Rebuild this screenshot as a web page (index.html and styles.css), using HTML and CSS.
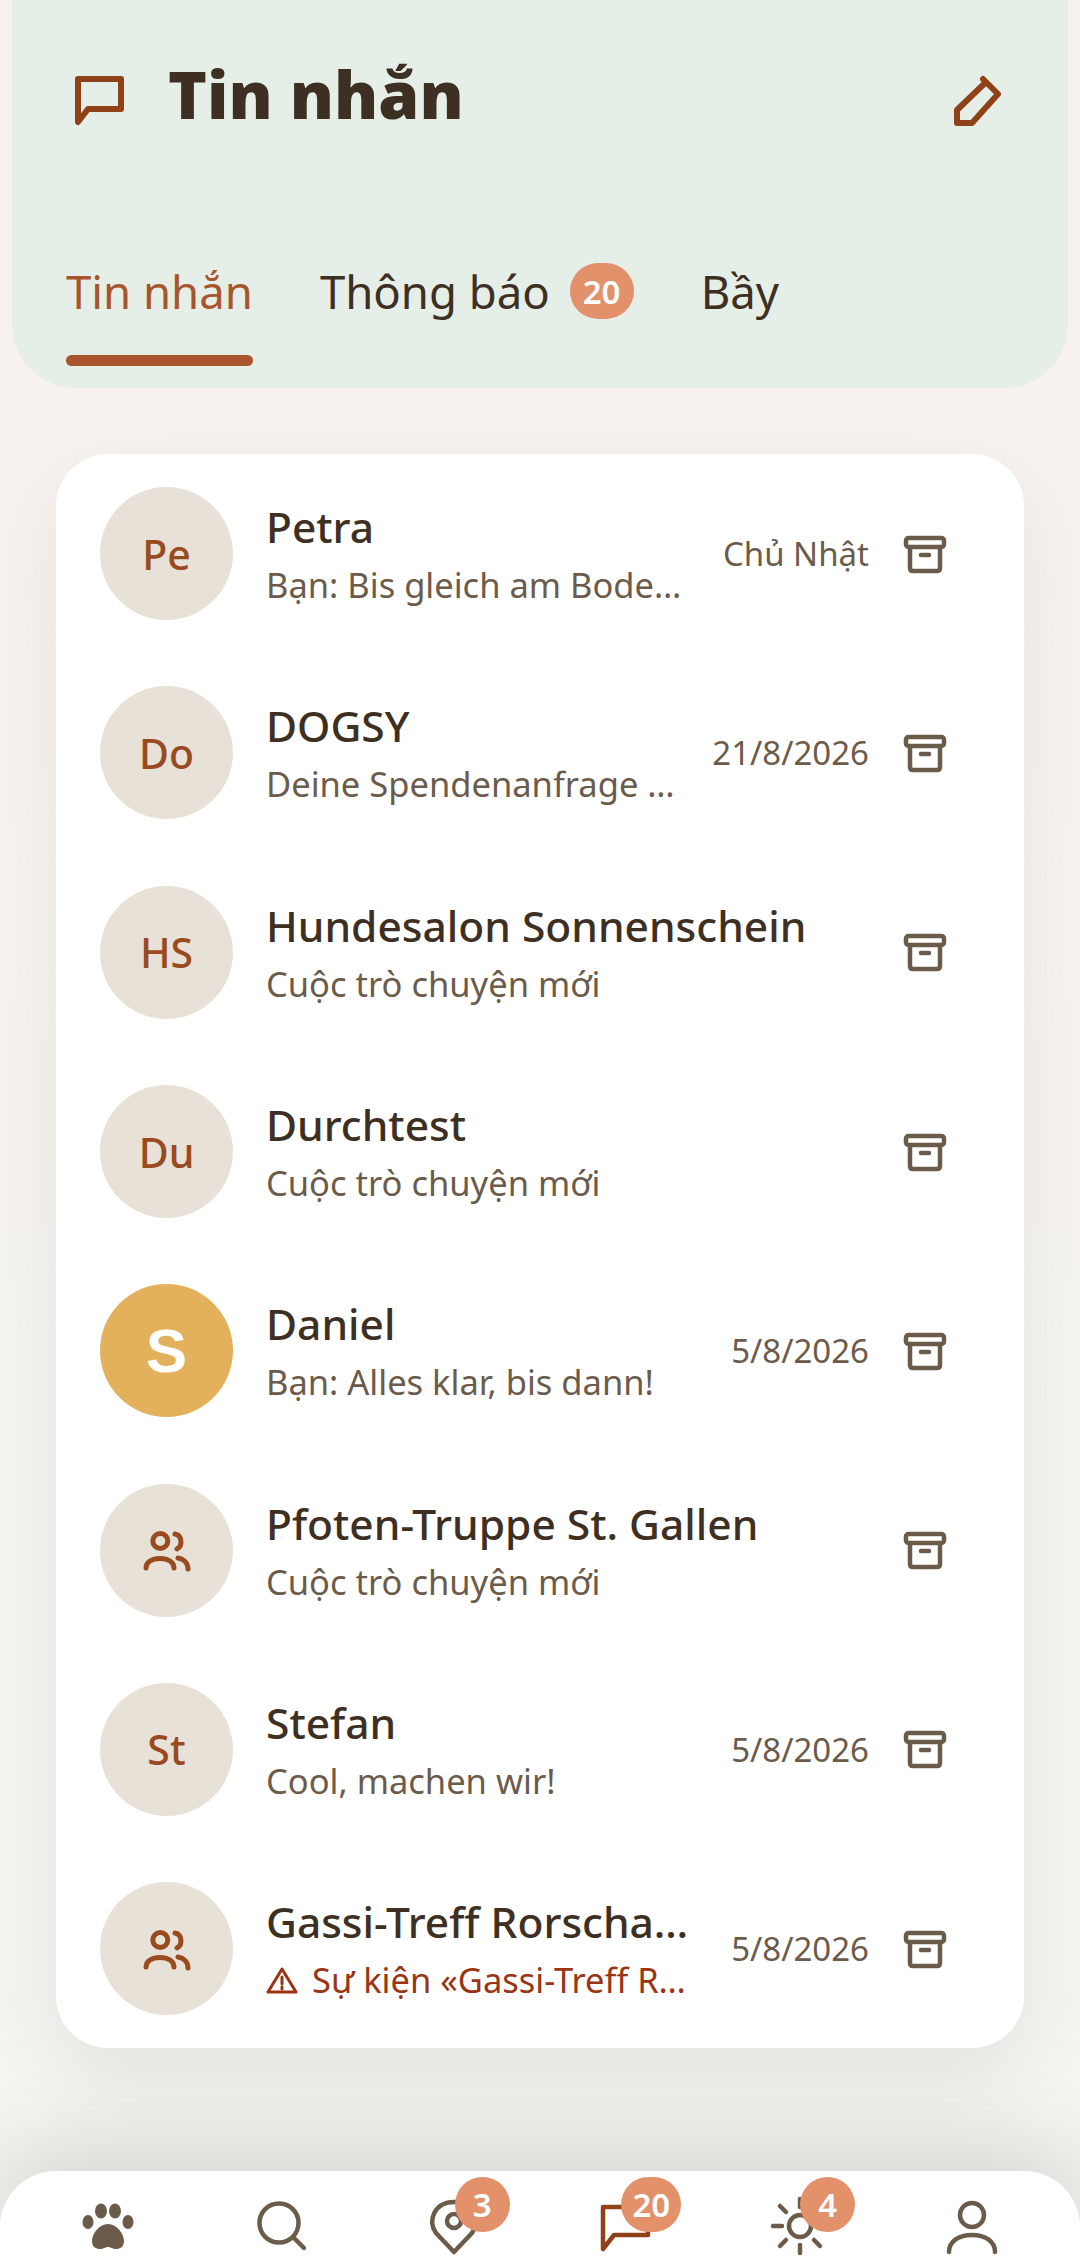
FILE: index.html
```html
<!DOCTYPE html>
<html lang="vi">
<head>
<meta charset="utf-8">
<title>Tin nhắn</title>
<link rel="stylesheet" href="styles.css">
</head>
<body>
<div class="app">
  <header class="hero">
    <div class="hero-top">
      <svg class="hero-icon" viewBox="0 0 60 60"><path d="M9 52V9H52V39H19Z"/></svg>
      <h1 class="title">Tin nhắn</h1>
      <svg class="hero-edit" viewBox="0 0 60 60"><path d="M33 9L48 24L22 53H7V40L35 13"/></svg>
    </div>
    <nav class="tabs">
      <div class="tab tab-active">Tin nhắn</div>
      <div class="tab">Thông báo <span class="tab-badge">20</span></div>
      <div class="tab">Bầy</div>
    </nav>
  </header>

  <main class="card">
    <div class="row">
      <div class="avatar">Pe</div>
      <div class="text"><div class="name">Petra</div><div class="sub">Bạn: Bis gleich am Bodensee</div></div>
      <div class="date">Chủ Nhật</div>
      <svg class="archive" viewBox="0 0 60 60"><use href="#i-archive"/></svg>
    </div>
    <div class="row">
      <div class="avatar">Do</div>
      <div class="text"><div class="name">DOGSY</div><div class="sub">Deine Spendenanfrage wurde</div></div>
      <div class="date">21/8/2026</div>
      <svg class="archive" viewBox="0 0 60 60"><use href="#i-archive"/></svg>
    </div>
    <div class="row">
      <div class="avatar">HS</div>
      <div class="text"><div class="name">Hundesalon Sonnenschein</div><div class="sub">Cuộc trò chuyện mới</div></div>
      <svg class="archive" viewBox="0 0 60 60"><use href="#i-archive"/></svg>
    </div>
    <div class="row">
      <div class="avatar">Du</div>
      <div class="text"><div class="name">Durchtest</div><div class="sub">Cuộc trò chuyện mới</div></div>
      <svg class="archive" viewBox="0 0 60 60"><use href="#i-archive"/></svg>
    </div>
    <div class="row">
      <div class="avatar avatar-gold">S</div>
      <div class="text"><div class="name">Daniel</div><div class="sub">Bạn: Alles klar, bis dann!</div></div>
      <div class="date">5/8/2026</div>
      <svg class="archive" viewBox="0 0 60 60"><use href="#i-archive"/></svg>
    </div>
    <div class="row">
      <div class="avatar"><svg class="group" viewBox="0 0 60 60"><use href="#i-group"/></svg></div>
      <div class="text"><div class="name">Pfoten-Truppe St. Gallen</div><div class="sub">Cuộc trò chuyện mới</div></div>
      <svg class="archive" viewBox="0 0 60 60"><use href="#i-archive"/></svg>
    </div>
    <div class="row">
      <div class="avatar">St</div>
      <div class="text"><div class="name">Stefan</div><div class="sub">Cool, machen wir!</div></div>
      <div class="date">5/8/2026</div>
      <svg class="archive" viewBox="0 0 60 60"><use href="#i-archive"/></svg>
    </div>
    <div class="row">
      <div class="avatar"><svg class="group" viewBox="0 0 60 60"><use href="#i-group"/></svg></div>
      <div class="text"><div class="name">Gassi-Treff Rorschacherberg</div><div class="sub sub-alert"><svg class="warn" viewBox="0 0 32 28"><path d="M16 3L30 26H2Z"/><path d="M16 11V18M16 21V23"/></svg><span class="sub-clip">Sự kiện «Gassi-Treff Rorschach»</span></div></div>
      <div class="date">5/8/2026</div>
      <svg class="archive" viewBox="0 0 60 60"><use href="#i-archive"/></svg>
    </div>
  </main>

  <footer class="nav">
    <div class="nav-item">
      <svg class="nav-icon" viewBox="0 0 60 60"><g class="fill"><ellipse cx="23" cy="15" rx="6" ry="7.5"/><ellipse cx="37" cy="15" rx="6" ry="7.5"/><ellipse cx="10" cy="26" rx="5.5" ry="7"/><ellipse cx="50" cy="26" rx="5.5" ry="7"/><path d="M30 28C39 28 46 38 46 45C46 51 42 53 38 53C34 53 33 51 30 51C27 51 26 53 22 53C18 53 14 51 14 45C14 38 21 28 30 28Z"/></g></svg>
    </div>
    <div class="nav-item">
      <svg class="nav-icon" viewBox="0 0 60 60"><circle cx="28" cy="27" r="19.5"/><path d="M42 41L53 52"/></svg>
    </div>
    <div class="nav-item">
      <svg class="nav-icon" viewBox="0 0 60 60"><path d="M30 56L12 37C3 24 11 6 30 6C49 6 57 24 48 37Z"/><circle cx="30" cy="25" r="7"/></svg>
      <span class="nav-badge badge-a">3</span>
    </div>
    <div class="nav-item">
      <svg class="nav-icon nav-icon-active" viewBox="0 0 60 60"><path d="M7 53V11H52V39H18Z"/></svg>
      <span class="nav-badge badge-b">20</span>
    </div>
    <div class="nav-item">
      <svg class="nav-icon" viewBox="0 0 60 60"><circle cx="31" cy="30" r="11"/><path d="M31 3V11M31 49V57M4 30H13M11 10L17 16M45 44L51 50M11 50L17 44M45 16L51 10"/></svg>
      <span class="nav-badge badge-a">4</span>
    </div>
    <div class="nav-item">
      <svg class="nav-icon" viewBox="0 0 60 60"><circle cx="30" cy="19" r="12"/><path d="M7 56C7 45 17 39 30 39C43 39 53 45 53 56"/></svg>
    </div>
  </footer>
</div>

<svg class="defs" width="0" height="0">
  <defs>
    <g id="i-archive"><rect x="11" y="14" width="38" height="9" rx="2.5"/><path d="M15 23V44Q15 47 18 47H42Q45 47 45 44V23"/><path d="M26 31H34"/></g>
    <g id="i-group"><circle cx="23.3" cy="21" r="7.5"/><path d="M9 48C9 42 15 38.5 23 38.5C31 38.5 37 42 37 48"/><path d="M38 14C45 15 46 26 40 29"/><path d="M41 38C47 39 51 43 51 49"/></g>
  </defs>
</svg>
</body>
</html>
```
FILE: styles.css
```css
* { box-sizing: border-box; }
html, body { margin: 0; height: 2268px; overflow: hidden; }
body {
  font-family: "Noto Sans", "Open Sans", sans-serif;
  color: #3d3023;
  background: linear-gradient(#f8f2ee 25%, #f5f4f0 65%);
}
.app {
  height: 2268px;
  display: flex;
  flex-direction: column;
}
.hero {
  margin: 0 12px;
  height: 388px;
  background: #e6eee8;
  border-radius: 0 0 64px 64px;
  display: flex;
  flex-direction: column;
  padding: 0 54px;
}
.hero-top {
  display: flex;
  align-items: center;
  height: 186px;
  margin-left: 3px;
  margin-right: 4px;
}
.hero-icon, .hero-edit {
  width: 60px;
  height: 60px;
  fill: none;
  stroke: #8f4218;
  stroke-width: 6;
  stroke-linecap: round;
  stroke-linejoin: round;
  flex: none;
}
.hero-top svg { position: relative; top: 7px; }
.hero-edit { margin-left: auto; }
.title {
  margin: 0 0 0 39px;
  font-size: 66px;
  font-weight: 900;
  line-height: 1;
  color: #3d3023;
}
.tabs {
  display: flex;
  gap: 67px;
  margin-top: 70px;
}
.tab {
  display: flex;
  align-items: center;
  height: 110px;
  font-size: 45.5px;
  position: relative;
  padding-bottom: 40px;
  white-space: pre;
}
.tab-active { color: #a8552e; }
.tab-active::after {
  content: "";
  position: absolute;
  left: 0;
  right: 0;
  bottom: 0;
  height: 11px;
  border-radius: 6px;
  background: #a8552e;
}
.tab-badge {
  margin-left: 8px;
  width: 64px;
  height: 56px;
  border-radius: 28px;
  background: #e2916b;
  color: #fff;
  font-size: 33px;
  font-weight: 600;
  display: flex;
  align-items: center;
  justify-content: center;
}
.card {
  margin: 66px 56px 0;
  background: #fff;
  border-radius: 52px;
  box-shadow: 0 30px 80px rgba(0, 0, 0, 0.07);
  flex: none;
}
.row {
  height: 199.3px;
  display: flex;
  align-items: center;
  padding: 0 69px 0 44px;
}
.avatar {
  width: 133px;
  height: 133px;
  flex: none;
  border-radius: 50%;
  background: #e7e1d8;
  color: #9a4a1f;
  font-size: 41px;
  font-weight: 500;
  display: flex;
  align-items: center;
  justify-content: center;
}
.avatar-gold {
  background: #e3b05c;
  color: #fff;
  font-family: "Liberation Sans", sans-serif;
  font-size: 62px;
  font-weight: 700;
}
.group {
  width: 60px;
  height: 60px;
  fill: none;
  stroke: #9a4a1f;
  stroke-width: 5;
  stroke-linecap: round;
}
.text {
  flex: 1;
  min-width: 0;
  margin-left: 33px;
}
.name {
  font-size: 42.5px;
  line-height: 56px;
  font-weight: 500;
  white-space: nowrap;
  overflow: hidden;
  text-overflow: ellipsis;
}
.sub {
  margin-top: 7px;
  font-size: 34.5px;
  line-height: 46px;
  color: #6b5b4b;
  white-space: nowrap;
  overflow: hidden;
  text-overflow: ellipsis;
}
.sub-alert {
  display: flex;
  align-items: center;
  color: #9a3412;
}
.sub-clip {
  min-width: 0;
  overflow: hidden;
  text-overflow: ellipsis;
}
.warn {
  width: 32px;
  height: 28px;
  flex: none;
  margin-right: 14px;
  fill: none;
  stroke: #9a3412;
  stroke-width: 3;
  stroke-linejoin: round;
  stroke-linecap: round;
}
.date {
  flex: none;
  margin-left: 36px;
  font-size: 33px;
  color: #6b5b4b;
}
.archive {
  width: 60px;
  height: 60px;
  flex: none;
  margin-left: 26px;
  fill: none;
  stroke: #6b5b4b;
  stroke-width: 4.5;
  stroke-linejoin: round;
  stroke-linecap: round;
}
.nav {
  margin-top: auto;
  height: 97px;
  background: #fff;
  border-radius: 56px 56px 0 0;
  box-shadow: 0 -10px 100px rgba(0, 0, 0, 0.17);
  display: flex;
  padding: 25px 21.6px 0;
  flex: none;
}
.nav-item {
  flex: 1;
  display: flex;
  justify-content: center;
  position: relative;
  height: 60px;
}
.nav-icon {
  width: 60px;
  height: 60px;
  fill: none;
  stroke: #6b5b4b;
  stroke-width: 4.5;
  stroke-linecap: round;
  stroke-linejoin: round;
}
.nav-icon .fill { fill: #6b5b4b; stroke: none; }
.nav-icon-active { stroke: #8f4218; }
.nav-badge {
  position: absolute;
  top: -19px;
  height: 55px;
  border-radius: 28px;
  background: #e2916b;
  color: #fff;
  font-size: 33px;
  font-weight: 600;
  display: flex;
  align-items: center;
  justify-content: center;
}
.badge-a { width: 55px; left: calc(50% + 1px); }
.badge-b { width: 60px; left: calc(50% - 5px); }
.defs { position: absolute; }
```
